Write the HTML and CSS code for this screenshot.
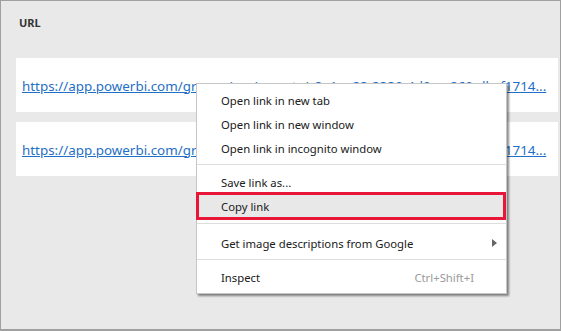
FILE: index.html
```html
<!DOCTYPE html>
<html>
<head>
    <title>URL column</title>
    <link rel="stylesheet" href="styles.css">
</head>
<body>
    <div class="frame">
        <div class="col-head">URL</div>

        <div class="url-card">
            <a class="url-link" href="#">https://app.powerbi.com/groups/me/reports/c8e1ae23-3330-4d0e-a869-dbcf1714...</a>
        </div>
        <div class="url-card">
            <a class="url-link" href="#">https://app.powerbi.com/groups/me/reports/c8e1ae23-3330-4d0e-a869-dbcf1714...</a>
        </div>

        <div class="ctx-menu">
            <div class="ctx-item">Open link in new tab</div>
            <div class="ctx-item">Open link in new window</div>
            <div class="ctx-item">Open link in incognito window</div>
            <div class="ctx-sep"></div>
            <div class="ctx-item">Save link as...</div>
            <div class="ctx-item ctx-marked">Copy link</div>
            <div class="ctx-sep ctx-sep-wide"></div>
            <div class="ctx-item ctx-sub">
                <span>Get image descriptions from Google</span>
                <span class="ctx-arrow"></span>
            </div>
            <div class="ctx-sep"></div>
            <div class="ctx-item ctx-keyed">
                <span>Inspect</span>
                <span class="ctx-key">Ctrl+Shift+I</span>
            </div>
        </div>
    </div>
</body>
</html>
```

FILE: styles.css
```css
body {
    margin: 0;
    font-family: "Noto Sans", "Open Sans", sans-serif;
}
.frame {
    position: relative;
    width: 561px;
    height: 331px;
    box-sizing: border-box;
    border: 1px solid #a0a0a0;
    border-bottom-width: 2px;
    background-color: #e9e9e9;
    padding: 0 2px 0 15px;
}
.col-head {
    padding: 15px 0 0 3px;
    line-height: 14px;
    font-size: 11px;
    font-weight: bold;
    color: #333;
}
.url-card {
    display: flex;
    align-items: center;
    height: 54px;
    margin-top: 28px;
    margin-bottom: -18px;
    padding-left: 6px;
    background-color: #fff;
}
.url-link {
    color: #1f6fc5;
    font-size: 13.4px;
    line-height: 18px;
    padding-top: 1px;
    white-space: nowrap;
    text-decoration: underline;
}
.ctx-menu {
    position: absolute;
    left: 195px;
    top: 82px;
    width: 311px;
    box-sizing: border-box;
    padding: 4px 0 4px 0;
    background-color: #fff;
    border: 1px solid #c6c6c6;
    box-shadow: 2px 2px 2px rgba(0,0,0,0.45);
    font-size: 11.3px;
    color: #202020;
}
.ctx-item {
    display: flex;
    align-items: center;
    height: 24px;
    padding-left: 24px;
}
.ctx-marked {
    box-sizing: border-box;
    height: 28px;
    margin: -2px 0 0 -1px;
    padding-left: 22px;
    border: 3px solid #e8173a;
    background-color: #e8e8e8;
}
.ctx-sep {
    height: 1px;
    margin: 4px 0 5px 0;
    background-color: #dedede;
}
.ctx-sep-wide {
    margin: 3px 0 7px 0;
}
.ctx-sub {
    justify-content: space-between;
    padding-right: 9px;
}
.ctx-arrow {
    width: 0;
    height: 0;
    border-top: 4px solid transparent;
    border-bottom: 4px solid transparent;
    border-left: 5px solid #666;
}
.ctx-keyed {
    justify-content: space-between;
    padding-right: 32px;
}
.ctx-key {
    color: #9a9a9a;
}
```
